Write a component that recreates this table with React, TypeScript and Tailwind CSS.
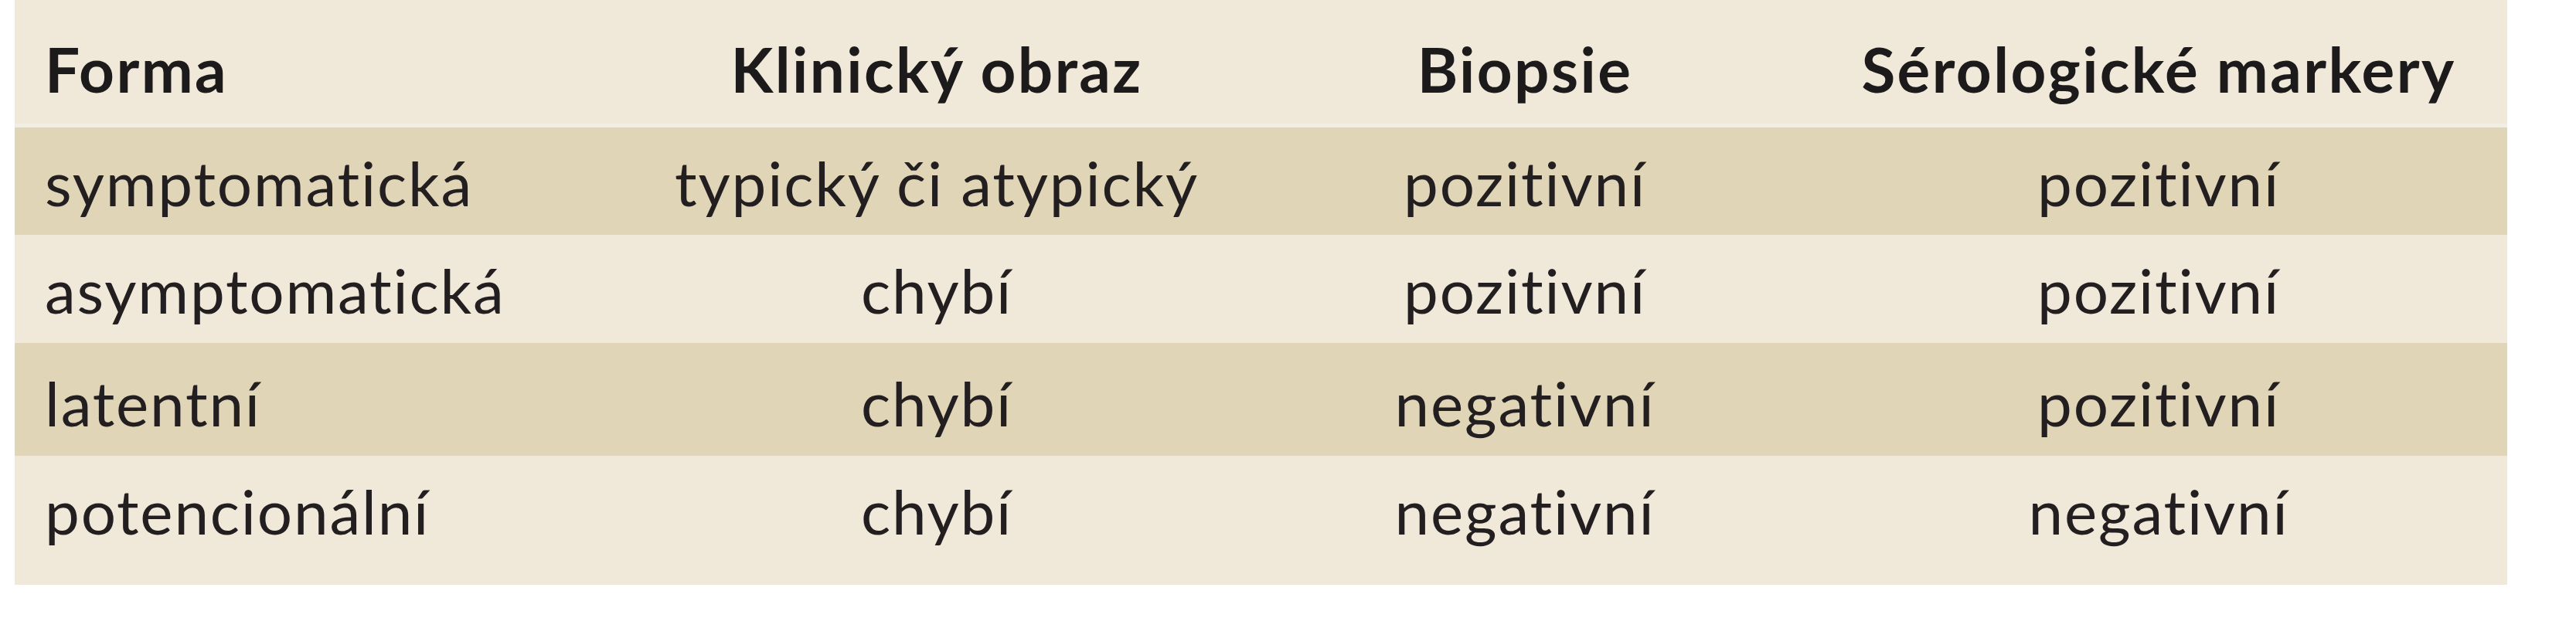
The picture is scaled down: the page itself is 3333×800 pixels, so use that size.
const rows = [
  { forma: "symptomatická", obraz: "typický či atypický", biopsie: "pozitivní", markery: "pozitivní", dark: true, h: "h-[139px]", pt: "pt-[31px]" },
  { forma: "asymptomatická", obraz: "chybí", biopsie: "pozitivní", markery: "pozitivní", dark: false, h: "h-[140px]", pt: "pt-[31px]" },
  { forma: "latentní", obraz: "chybí", biopsie: "negativní", markery: "pozitivní", dark: true, h: "h-[146px]", pt: "pt-[37px]" },
  { forma: "potencionální", obraz: "chybí", biopsie: "negativní", markery: "negativní", dark: false, h: "h-[167px]", pt: "pt-[31px]" },
];

const cols = "grid grid-cols-[801px_784px_738px_902px]";

export default function App() {
  return (
    <div className="w-[3333px] h-[800px] bg-white font-['Lato',sans-serif] text-[80px] leading-[80px] text-[#231f20]">
      <div className="ml-[19px] w-[3225px] bg-[#f0e9da]">
        <div className={`${cols} h-[160px] pt-[49px] font-bold tracking-[2.4px] text-[#1c1a1a]`}>
          <div className="pl-[39px]">Forma</div>
          <div className="text-center">Klinický obraz</div>
          <div className="text-center">Biopsie</div>
          <div className="text-center">Sérologické markery</div>
        </div>
        <div className="h-[5px] bg-[#f3eee4]" />
        {rows.map((r, i) => (
          <div
            key={i}
            className={`${cols} ${r.h} ${r.pt} tracking-[1.8px] ${r.dark ? "bg-[#e0d5b7]" : "bg-[#f0e9da]"}`}
          >
            <div className="pl-[39px]">{r.forma}</div>
            <div className="text-center">{r.obraz}</div>
            <div className="text-center">{r.biopsie}</div>
            <div className="text-center">{r.markery}</div>
          </div>
        ))}
      </div>
    </div>
  );
}
